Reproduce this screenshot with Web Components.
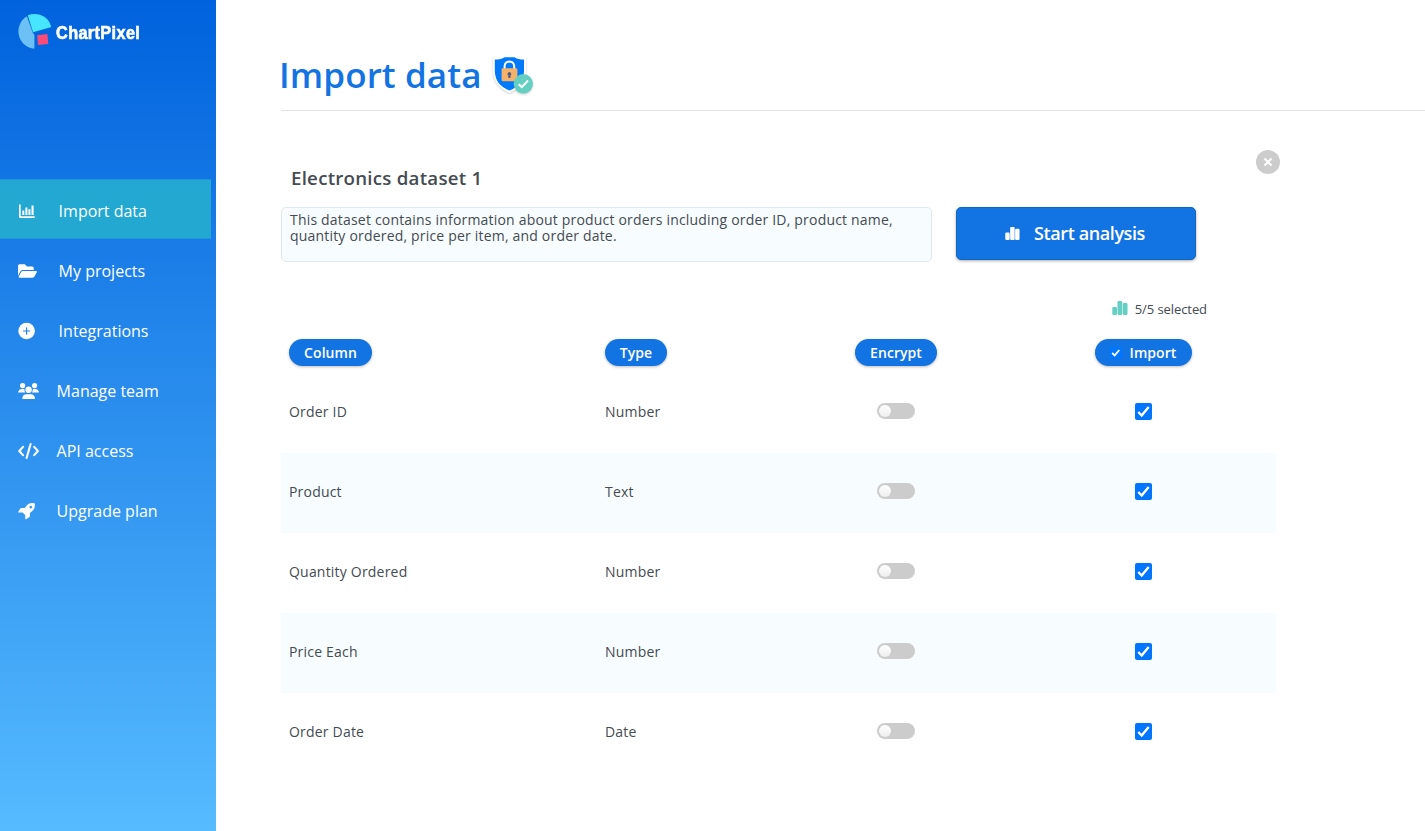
<!DOCTYPE html>
<html lang="en">
<head>
<meta charset="utf-8">
<title>ChartPixel - Import data</title>
<style>
html,body{margin:0;height:100%}
body{font-family:"Open Sans",sans-serif;color:#444b52;background:#fff;overflow:hidden}
</style>
</head>
<body>
<cp-app></cp-app>
<script>
const define = (name, html, setup) => customElements.define(name, class extends HTMLElement {
  connectedCallback() {
    if (this.shadowRoot) return;
    const t = document.createElement('template');
    t.innerHTML = html;
    this.attachShadow({mode: 'open'}).append(t.content.cloneNode(true));
    if (setup) setup(this, this.shadowRoot);
  }
});

const icons = {
  chart: '<path d="M1 2.6h1.7v11.7h14V16H2.2Q1 16 1 14.8z"/><path d="M4.3 8.4h2V13h-2zM7.4 5.4h2V13h-2zM10.4 7.2h2V13h-2zM13.5 3.6h2.1V13h-2.1z"/>',
  folder: '<path transform="translate(0 .1) scale(.0328 .0348)" d="M572.694 292.093L500.27 416.248A63.997 63.997 0 0 1 444.989 448H45.025c-18.523 0-30.064-20.093-20.731-36.093l72.424-124.155A64 64 0 0 1 152 256h399.964c18.523 0 30.064 20.093 20.73 36.093zM152 224h328v-48c0-26.51-21.49-48-48-48H272l-64-64H48C21.49 64 0 85.49 0 112v278.046l69.077-118.418C86.214 242.25 117.989 224 152 224z"/>',
  plus: '<circle cx="8.6" cy="9" r="8.3"/><path d="M8.6 5.9v6.2M5.5 9h6.2" stroke="#2583e7" stroke-width="1.2" stroke-linecap="round"/>',
  users: '<circle cx="4.6" cy="3.6" r="2.6"/><circle cx="16.6" cy="3.6" r="2.6"/><circle cx="10.6" cy="7.8" r="3.2"/><path d="M.5 10.6Q0 10.6.2 9.8Q.8 7.2 3.5 7.1H5.8L6.6 7.4Q6.2 9 7.3 10.6zM20.6 10.6Q21.1 10.6 20.9 9.8Q20.3 7.2 17.6 7.1H15.4L14.6 7.4Q15 9 13.9 10.6zM4.6 17Q4.2 17 4.3 16Q4.8 12.3 8.4 12.2H12.8Q16.4 12.3 16.9 16Q17 17 16.6 17z"/>',
  code: '<path d="M5 4.9L1.3 9L5 13.1M16.2 4.9L19.9 9L16.2 13.1M12.6 2L8.6 16" fill="none" stroke="#fff" stroke-width="2.1" stroke-linecap="round" stroke-linejoin="round"/>',
  rocket: '<path fill-rule="evenodd" d="M16.4 1.3Q11.2.2 8 4.4L6.8 6H3.5Q2.6 6 2.1 6.8L.2 9.9Q-.1 10.6.7 10.6L4.6 10.5L7.3 13.2L7.2 16.8Q7.3 17.5 8 17.2L11.2 15.3Q11.9 14.9 11.9 14V11L13.4 9.8Q17.7 6.6 16.7 1.6zM12.8 3.7a1.4 1.4 0 1 0 .01 0z"/>'
};

define('cp-logo', `<style>
:host{display:flex;align-items:center;height:36px;padding:13px 0 0 16px;color:#fff}
span{font:bold 17.5px "Liberation Sans",sans-serif;margin:4px 0 0 4px;-webkit-text-stroke:.6px #fff;transform-origin:left;transform:scaleX(.93);letter-spacing:.4px}
svg{flex:none}
</style>
<svg width="36" height="37" viewBox="0 0 36 37"><path d="M18.4 35.8A17.6 17.6 0 0 1 10.9 3.2L16.8 19.8L18.4 22z" fill="#6bc0f4"/><path d="M11.8 2.3Q17.6 .2 24 1.8Q32.4 4.2 35.4 13.9L17.1 19.3z" fill="#47e5ff"/><path d="M21.2 22.2L31.4 20.9L32.3 30.9L22 32z" fill="#fb4c79"/></svg><span>ChartPixel</span>`);

define('cp-nav-item', `<style>
:host{display:flex;height:60px;width:211px;box-sizing:border-box;padding:4px 0 0 18px;align-items:center;color:#fff;font-size:16px;line-height:22px}
:host([active]){background:#22a8d1;box-shadow:inset 0 1px #1b98d7,inset 0 -1px #1b98d7}
svg{flex:none;fill:#fff;margin-right:var(--gap,18.6px)}
slot{display:block;white-space:nowrap}
</style><svg width="22" height="18" viewBox="0 0 22 18"></svg><slot></slot>`,
(h, r) => { r.querySelector('svg').innerHTML = icons[h.getAttribute('icon')]; });

define('cp-sidebar', `<style>
:host{display:flex;flex-direction:column;width:216px;flex:none;height:100%;background:linear-gradient(#0062dd,#56bbff)}
nav{display:flex;flex-direction:column;margin-top:130px}
.near{--gap:16.6px}
</style><cp-logo></cp-logo><nav>
<cp-nav-item icon="chart" active>Import data</cp-nav-item>
<cp-nav-item icon="folder">My projects</cp-nav-item>
<cp-nav-item icon="plus">Integrations</cp-nav-item>
<cp-nav-item icon="users" class="near">Manage team</cp-nav-item>
<cp-nav-item icon="code" class="near">API access</cp-nav-item>
<cp-nav-item icon="rocket" class="near">Upgrade plan</cp-nav-item></nav>`);

define('cp-shield', `<style>:host{display:block;width:44px;height:42px}svg{display:block;filter:drop-shadow(0 1px 1px #0003)}</style>
<svg width="44" height="42" viewBox="0 0 44 42"><path d="M2 3.2V18Q3 32 18.5 39Q34 32 35 18V3.2z" fill="#fff"/><path d="M3.8 5.6Q10.5 5.6 13.5 3.2H23.5Q26.5 5.6 33 5.6V17Q32.5 31.5 18.5 36.4Q4.3 31.5 3.8 17z" fill="#0079fb"/><path d="M13.6 15.5V12Q13.9 7.5 18.4 7.4Q22.9 7.5 23.2 12V15.5" fill="none" stroke="#fff" stroke-width="2"/><rect x="10.6" y="14.3" width="15.8" height="13" rx="1.2" fill="#f6b268"/><path d="M18.4 18a2 2 0 0 1 1.1 3.6V24h-2.2v-2.4A2 2 0 0 1 18.4 18z" fill="#505f82"/><circle cx="32.3" cy="29.8" r="9.7" fill="#65cfc3"/><path d="M27.7 30.2L30.8 33.1L37 26.5" fill="none" stroke="#fff" stroke-width="2"/></svg>`);

define('cp-heading', `<style>
:host{display:flex;box-sizing:border-box;margin-left:65px;border-bottom:1px solid #e2e2e2;height:111px;align-items:flex-start}
h1{font-size:35px;line-height:48px;font-weight:600;color:#1273e2;margin:51px 0 0 -2px;width:212px;white-space:nowrap;letter-spacing:.1px}
cp-shield{margin-top:54px}
</style><h1><slot></slot></h1><cp-shield></cp-shield>`);

define('cp-bars', `<style>:host{display:block;width:16px;height:16px}svg{display:block;width:100%;height:100%;fill:currentColor}</style>
<svg viewBox="0 0 16 16"><rect x=".3" y="7" width="4.7" height="8" rx="1.2"/><rect x="5.5" y="1" width="4.8" height="14" rx="1.2"/><rect x="10.8" y="3" width="4.7" height="12" rx="1.2"/></svg>`);

define('cp-button', `<style>
:host{display:block}
button{font:600 18px/24px "Open Sans",sans-serif;letter-spacing:-.4px;color:#fff;background:#1273e2;border:1px solid #1068bd;border-radius:5px;width:240px;height:53px;box-shadow:0 1px 3px #0005;display:flex;align-items:center;justify-content:center;padding:0 2px 2px 0;gap:14px}
cp-bars{width:15px;height:15px;margin-top:2px}
</style><button><cp-bars></cp-bars><slot></slot></button>`);

define('cp-close', `<style>:host{display:block;width:24px;height:24px}svg{display:block}</style>
<svg width="24" height="24"><circle cx="12" cy="12" r="12" fill="#ccc"/><path d="M8.5 8.5l7 7m0-7l-7 7" stroke="#fff" stroke-width="2"/></svg>`);

define('cp-pill', `<style>
:host{display:flex;box-sizing:border-box;height:27px;border-radius:14px;background:#1273e2;color:#fff;font-weight:600;font-size:14px;line-height:27px;align-items:center;justify-content:center;box-shadow:0 1px 3px #0004;white-space:nowrap;letter-spacing:.05px}
svg{display:none;margin:1px 8px 0 -1px}:host([check]) svg{display:block}
</style><svg width="12" height="12" viewBox="0 0 12 12"><rect width="12" height="12" rx="1" fill="#0075ff"/><path d="M2.2 6L4.7 8.4L9.3 3" fill="none" stroke="#fff" stroke-width="1.8"/></svg><slot></slot>`);

define('cp-toggle', `<style>:host{display:block;width:38px;height:16px;border-radius:8px;background:#ccc;padding:2px;box-sizing:border-box}i{display:block;width:12px;height:12px;border-radius:50%;background:linear-gradient(#fff,#eee)}</style><i></i>`);

define('cp-check', `<style>:host{display:block;width:17px;height:17px}svg{display:block}</style>
<svg width="17" height="17"><rect width="17" height="17" rx="2" fill="#0075ff"/><path d="M3.3 9L6.7 12.5L13.7 4" fill="none" stroke="#fff" stroke-width="2.5"/></svg>`);

define('cp-row', `<style>
:host{display:grid;grid-template-columns:316px 250px 82px 1fr;height:80px;box-sizing:border-box;padding:0 84px 2px 8px;align-items:center;font-size:14px;line-height:20px;letter-spacing:.2px}
:host([striped]){background:#f7fcff}
cp-toggle{justify-self:center;margin-top:-2px}cp-check{justify-self:end;margin:-2px 40px 0 0}
</style><slot name="name"></slot><slot name="type"></slot><cp-toggle></cp-toggle><cp-check></cp-check>`);

define('cp-table', `<style>
:host{display:block;width:995px}
header{display:grid;grid-template-columns:316px 250px 82px 1fr;padding:0 84px 0 8px;height:34px;align-items:start}
.c{width:83px}.t{width:62px}.e{width:82px}.i{width:97px;justify-self:end}
</style><header><cp-pill class="c">Column</cp-pill><cp-pill class="t">Type</cp-pill><cp-pill class="e">Encrypt</cp-pill><cp-pill class="i" check>Import</cp-pill></header><main></main>`,
(h, r) => {
  const rows = [['Order ID','Number'],['Product','Text'],['Quantity Ordered','Number'],['Price Each','Number'],['Order Date','Date']];
  r.querySelector('main').innerHTML = rows.map(([n, t], i) => `<cp-row${i % 2 ? ' striped' : ''}><span slot="name">${n}</span><span slot="type">${t}</span></cp-row>`).join('');
});

define('cp-dataset', `<style>
:host{display:block;padding:39px 0 0 65px}
.title{display:flex;width:999px;justify-content:space-between;height:57px}
h2{font-size:18.7px;font-weight:600;line-height:26px;margin:15px 0 0 10px;letter-spacing:.24px}
.act{display:flex;gap:24px}
.desc{box-sizing:border-box;width:651px;height:55px;border:1px solid #dfe9f0;border-radius:5px;background:#f7fcff;padding:4px 8px;font-size:14px;line-height:16px;letter-spacing:.19px}
.sel{display:flex;justify-content:flex-end;align-items:center;width:926px;gap:7px;font-size:13px;line-height:18px;margin:38px 0 21px}
.sel span{letter-spacing:-.08px}
.sel cp-bars{color:#65cfc3;margin-top:-3px}
</style>
<div class="title"><h2>Electronics dataset 1</h2><cp-close></cp-close></div>
<div class="act"><div class="desc">This dataset contains information about product orders including order ID, product name, quantity ordered, price per item, and order date.</div><cp-button>Start analysis</cp-button></div>
<div class="sel"><cp-bars></cp-bars><span>5/5 selected</span></div>
<cp-table></cp-table>`);

define('cp-app', `<style>
:host{display:flex;height:100vh}
section{flex:1;min-width:0}
</style><cp-sidebar></cp-sidebar><section><cp-heading>Import data</cp-heading><cp-dataset></cp-dataset></section>`);
</script>
</body>
</html>
